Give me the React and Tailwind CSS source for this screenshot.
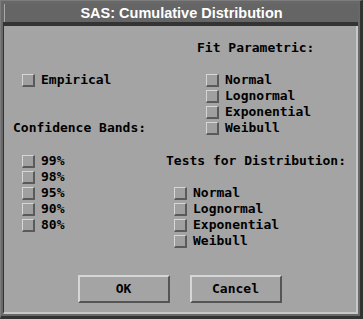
import React from "react";

const mono = "font-['DejaVu_Sans_Mono',monospace] font-bold text-[13px] leading-[16px] text-black";

function Box() {
  return (
    <span className="block w-[13px] h-[13px] shrink-0 border-t border-l border-t-[#d6d6d6] border-l-[#d6d6d6] border-r-2 border-b-2 border-r-[#5a5a5a] border-b-[#5a5a5a] bg-[#a0a0a0]" />
  );
}

function Check({ label }) {
  return (
    <div className="flex items-center h-[16px] gap-[6px]">
      <Box />
      <span className={mono + " whitespace-pre"}>{label}</span>
    </div>
  );
}

function Button({ label }) {
  return (
    <div className="w-[92px] h-[28px] flex items-center justify-center border-t-2 border-l-2 border-t-[#d6d6d6] border-l-[#d6d6d6] border-r-2 border-b-2 border-r-[#555555] border-b-[#555555] bg-[#a4a4a4]">
      <span className={mono}>{label}</span>
    </div>
  );
}

export default function App() {
  return (
    <div className="w-[363px] h-[319px] flex flex-col bg-[#686868] border-t border-l border-t-[#7c7c7c] border-l-[#7c7c7c] border-r-[3px] border-b-[3px] border-r-[#333333] border-b-[#333333] pl-[2px] pt-[3px] pr-[2px] pb-[2px]">
      <div className="flex-1 flex flex-col">
        <div className="ml-[1px] h-[18px] shrink-0 bg-[#656565] border-l border-l-[#a8a8a8] flex items-center justify-center">
          <span className="font-['Liberation_Sans',sans-serif] font-bold text-[14.5px] leading-[18px] text-white">
            SAS: Cumulative Distribution
          </span>
        </div>
        <div className="h-[4px] shrink-0 bg-[#333333]" />
        <div className="flex-1 flex flex-col bg-[#a4a4a4] border-l border-l-[#333333] border-r-2 border-b-2 border-r-[#c8c8c8] border-b-[#c8c8c8]">
          <div className="flex">
            <div className="w-[162px] pl-[9px] pt-[46px] flex flex-col">
              <div className="ml-[9px]">
                <Check label="Empirical" />
              </div>
              <div className={mono + " mt-[32px]"}>Confidence Bands:</div>
              <div className="ml-[9px] mt-[17px] flex flex-col">
                <Check label="99%" />
                <Check label="98%" />
                <Check label="95%" />
                <Check label="90%" />
                <Check label="80%" />
              </div>
            </div>
            <div className="flex-1 pt-[14px] flex flex-col">
              <div className={mono + " ml-[31px]"}>Fit Parametric:</div>
              <div className="ml-[40px] mt-[16px] flex flex-col">
                <Check label="Normal" />
                <Check label="Lognormal" />
                <Check label="Exponential" />
                <Check label="Weibull" />
              </div>
              <div className={mono + " mt-[17px]"}>Tests for Distribution:</div>
              <div className="ml-[8px] mt-[16px] flex flex-col">
                <Check label="Normal" />
                <Check label="Lognormal" />
                <Check label="Exponential" />
                <Check label="Weibull" />
              </div>
            </div>
          </div>
          <div className="mt-auto pb-[9px] flex justify-center gap-[20px] pr-[1px]">
            <Button label="OK" />
            <Button label="Cancel" />
          </div>
        </div>
      </div>
    </div>
  );
}
